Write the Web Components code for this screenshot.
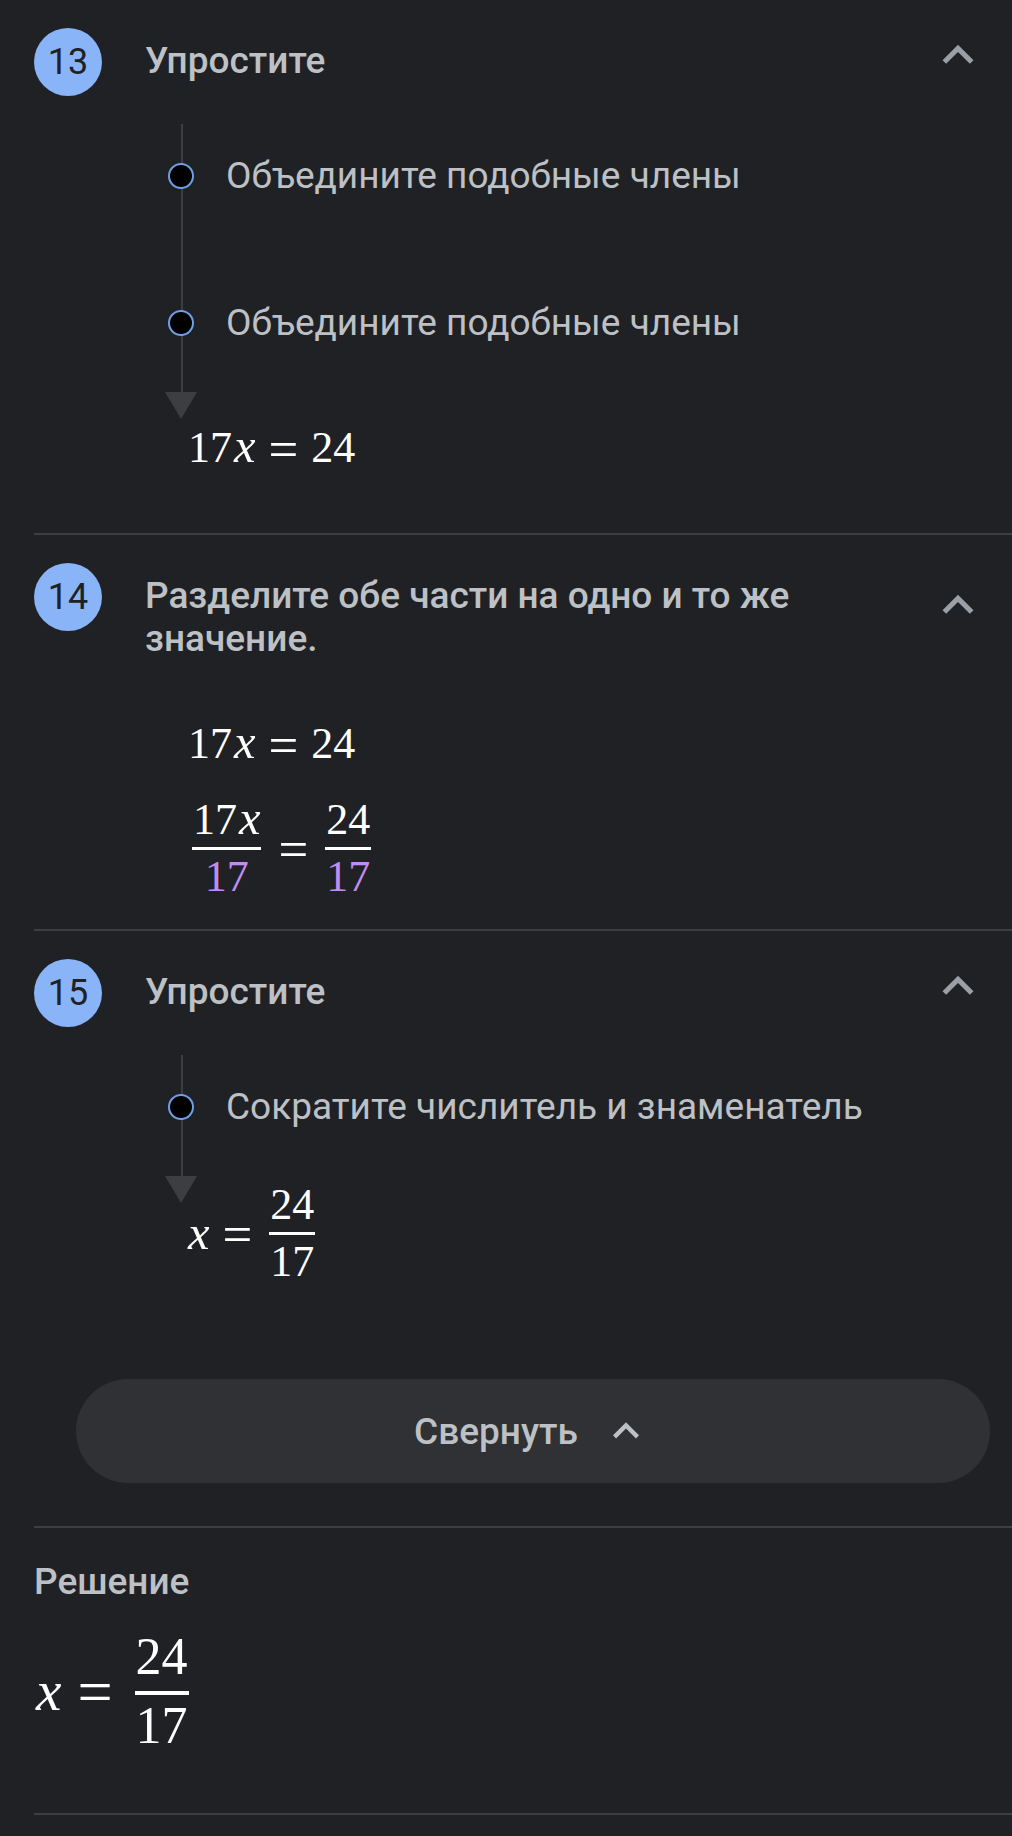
<!DOCTYPE html>
<html lang=ru>
<title>Решение</title>
<meta charset=utf-8>
<meta name=viewport content="width=device-width, initial-scale=1.0">
<style>
:root {
    --bg: #202124; --text: #bdc1c6; --line: #3c3e41;
    --icon: #9aa0a6; --accent: #8ab4f8; --mark: #c08df2;
}
body {
    margin: 0;
    background: var(--bg); color: var(--text);
    font: 37px/43px Roboto, "Noto Sans", sans-serif;
}
i { margin-left: 2px; font-size: 1.1em; line-height: 1px; }
math-row > i { margin-left: 0; }
math-row[large] > i { margin-left: 2px; }
.mark { color: var(--mark); }
</style>
<main>
    <solution-step number=13>
        Упростите
        <step-trail slot=body>
            <trail-note>Объедините подобные члены</trail-note>
            <trail-note>Объедините подобные члены</trail-note>
            <math-row slot=result><span>17<i>x</i></span><b>=</b><span>24</span></math-row>
        </step-trail>
    </solution-step>
    <solution-step number=14>
        Разделите обе части на одно и то же значение.
        <math-block slot=body>
            <math-row><span>17<i>x</i></span><b>=</b><span>24</span></math-row>
            <math-row>
                <math-frac>17<i>x</i><span slot=den class=mark>17</span></math-frac><b>=</b><math-frac>24<span slot=den class=mark>17</span></math-frac>
            </math-row>
        </math-block>
    </solution-step>
    <solution-step number=15>
        Упростите
        <step-trail slot=body tall>
            <trail-note>Сократите числитель и знаменатель</trail-note>
            <math-row slot=result><i>x</i><b>=</b><math-frac>24<span slot=den>17</span></math-frac></math-row>
        </step-trail>
    </solution-step>
    <collapse-button>Свернуть</collapse-button>
    <final-answer>
        Решение
        <math-row slot=answer large><i>x</i><b>=</b><math-frac large>24<span slot=den>17</span></math-frac></math-row>
    </final-answer>
</main>
<script>
const define = (name, html) => customElements.define(name, class extends HTMLElement {
    constructor() {
        super();
        this.attachShadow( {mode: 'open'} ).innerHTML = typeof html == 'function' ? html(this) : html;
    }
});
const chevron = '<svg viewBox="0 0 24 24" aria-hidden=true><path fill=currentColor d="M12 8l-6 6 1.41 1.41L12 10.83l4.59 4.58L18 14z"/></svg>';

define('solution-step', el => `
<style>
:host { display: block; margin-left: 34px; padding-top: 28px; }
:host(:nth-of-type(n+2)) { border-top: 2px solid var(--line); }
header { display: flex; align-items: flex-start; gap: 43px; padding-right: 23px; }
.number {
    flex: none; width: 68px; height: 68px; border-radius: 50%;
    background: var(--accent); color: var(--bg);
    font-size: 36px; line-height: 68px; text-align: center;
}
h2 { flex: 1; margin: 11px 0 0; font: inherit; font-weight: 500; }
button {
    flex: none; align-self: center;
    padding: 0 0 14px; border: 0; background: none; color: var(--icon);
}
svg { display: block; width: 62px; height: 62px; margin: -4px 0; }
</style>
<header>
    <span class=number>${el.getAttribute('number')}</span>
    <h2><slot></slot></h2>
    <button aria-label="Свернуть шаг" aria-expanded=true>${chevron}</button>
</header>
<slot name=body></slot>`);

// vertical rail with dots that ends in an arrow beside the result
define('step-trail', `
<style>
:host { display: block; margin: 28px 0 0 131px; padding-bottom: 55px; }
.end { display: flex; }
.arrow {
    flex: none; width: 32px; height: 27px;
    background: var(--line); clip-path: polygon(0 0, 100% 0, 50% 100%);
}
::slotted(math-row) { margin: 28px 0 0 -9px; }
:host([tall]) ::slotted(math-row) { margin-top: 5px; }
</style>
<slot></slot>
<div class=end><div class=arrow></div><slot name=result></slot></div>`);

define('trail-note', `
<style>
:host {
    display: flex; align-items: center; gap: 29px;
    padding: 30px 0 48px;
    background: linear-gradient(var(--line), var(--line)) 16px 0 / 2px 100% no-repeat;
}
:host(:nth-of-type(n+2)) { padding-top: 56px; }
.dot {
    flex: none; box-sizing: border-box; width: 26px; height: 26px; margin: 0 3px;
    border: 2px solid #6ea0e6; border-radius: 50%; background: #000;
}
</style>
<span class=dot></span><span><slot></slot></span>`);

define('math-block', `
<style>
:host { display: grid; gap: 22px; margin: 56px 0 0 154px; padding-bottom: 28px; }
</style>
<slot></slot>`);

define('math-row', `
<style>
:host {
    display: flex; align-items: center;
    color: #fff; font: 44px/56px "Liberation Serif", serif;
}
:host([large]) { font-size: 52px; }
::slotted(:not(math-frac)) { padding-bottom: 2px; line-height: 56px; }
::slotted(b) { margin: 0 13px; padding: 0; font-weight: 400; font-size: 1.2em; }
:host([large]) ::slotted(b) { margin: 0 16px; }
</style>
<slot></slot>`);

define('math-frac', `
<style>
:host { display: grid; justify-items: center; margin: 0 4px; line-height: 48px; }
:host([large]) { margin: 0 6px; line-height: 56px; }
.num { padding: 0 1px; }
.bar { justify-self: stretch; height: 3px; margin: 3px 0; background: currentColor; }
:host([large]) .bar { height: 4px; margin: 6px 0 3px; }
</style>
<span class=num><slot></slot></span><span class=bar></span><slot name=den></slot>`);

define('collapse-button', `
<style>
:host { display: block; padding: 38px 22px 43px 76px; }
button {
    display: flex; justify-content: center; align-items: center; gap: 22px;
    width: 100%; height: 104px; padding: 0; border: 0; border-radius: 52px;
    background: #303134; color: var(--text); font: inherit; font-weight: 500;
}
svg { width: 52px; height: 52px; }
</style>
<button><slot></slot>${chevron}</button>`);

define('final-answer', `
<style>
:host { display: block; margin-left: 34px; padding: 32px 0 59px; border: solid var(--line); border-width: 2px 0; }
h2 { margin: 0 0 26px; font: inherit; font-weight: 500; }
</style>
<h2><slot></slot></h2>
<slot name=answer></slot>`);
</script>
</html>
